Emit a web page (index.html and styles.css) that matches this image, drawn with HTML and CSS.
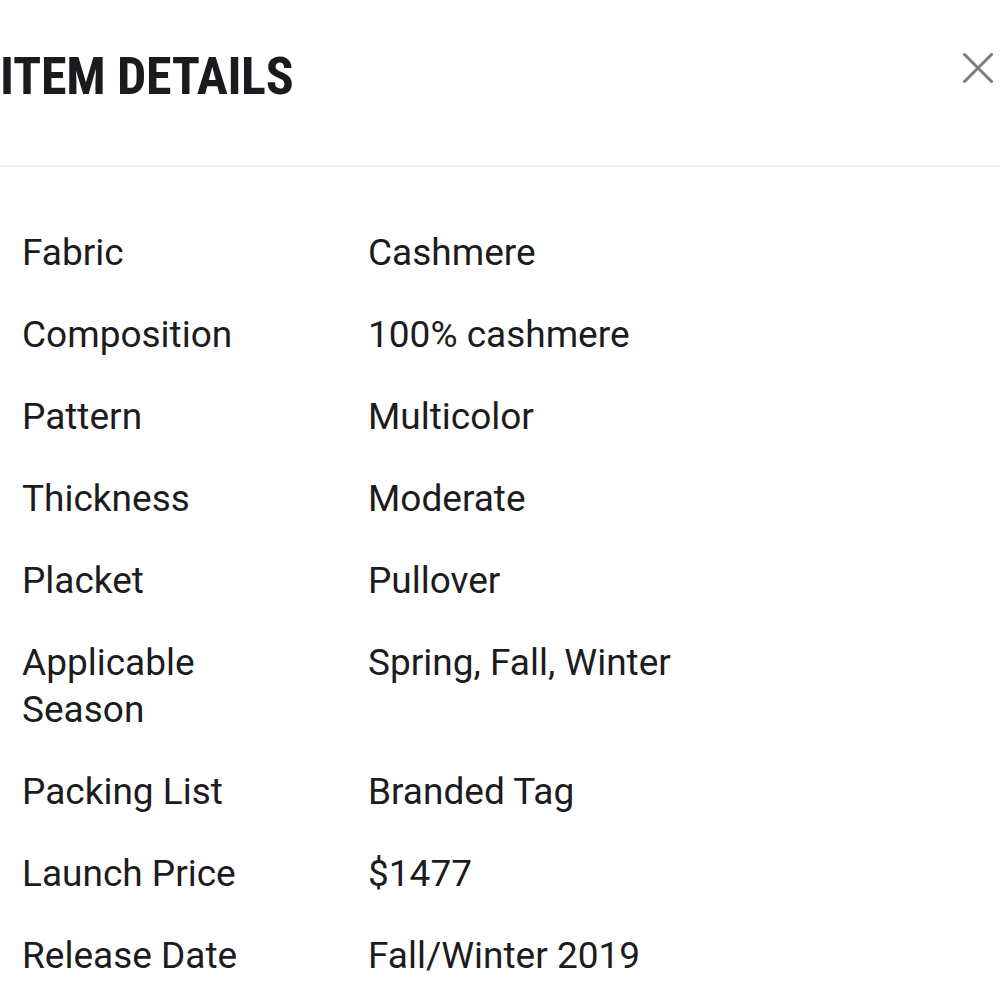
FILE: index.html
```html
<!DOCTYPE html>
<html lang="en">
<head>
<meta charset="utf-8">
<title>Item Details</title>
<link rel="stylesheet" href="styles.css">
</head>
<body>
<div class="sheet">
  <header class="sheet-header">
    <h1 class="sheet-title">ITEM DETAILS</h1>
    <button class="close-btn" aria-label="Close">
      <svg viewBox="0 0 30 30" width="30" height="30"><path d="M1.5 1.5 L28.5 28.5 M28.5 1.5 L1.5 28.5" stroke="#7a7a80" stroke-width="3" fill="none" stroke-linecap="round"/></svg>
    </button>
  </header>
  <dl class="details">
    <div class="row"><dt>Fabric</dt><dd>Cashmere</dd></div>
    <div class="row"><dt>Composition</dt><dd>100% cashmere</dd></div>
    <div class="row"><dt>Pattern</dt><dd>Multicolor</dd></div>
    <div class="row"><dt>Thickness</dt><dd>Moderate</dd></div>
    <div class="row"><dt>Placket</dt><dd>Pullover</dd></div>
    <div class="row"><dt>Applicable Season</dt><dd>Spring, Fall, Winter</dd></div>
    <div class="row"><dt>Packing List</dt><dd>Branded Tag</dd></div>
    <div class="row"><dt>Launch Price</dt><dd>$1477</dd></div>
    <div class="row"><dt>Release Date</dt><dd>Fall/Winter 2019</dd></div>
  </dl>
</div>
</body>
</html>
```
FILE: styles.css
```css
* { box-sizing: border-box; }
html, body { margin: 0; padding: 0; background: #fff; }
body { font-family: Roboto, "Noto Sans", "Liberation Sans", sans-serif; color: #1c1c1e; }
.sheet { width: 1000px; }
.sheet-header {
  position: relative;
  padding: 51px 0 62px 0;
  border-bottom: 2px solid #f1f1f1;
}
.sheet-title {
  margin: 0;
  font-family: "Roboto Condensed", Roboto, sans-serif;
  font-weight: 700;
  font-size: 52px;
  line-height: 52px;
  letter-spacing: -0.3px;
  color: #1b1b1f;
}
.close-btn {
  position: absolute;
  top: 53px;
  right: 7px;
  width: 30px;
  height: 30px;
  padding: 0;
  border: 0;
  background: none;
}
.close-btn svg { display: block; }
.details {
  margin: 0;
  padding: 44px 0 0 22px;
}
.row {
  display: grid;
  grid-template-columns: 346px 1fr;
  padding: 17.5px 0;
  font-size: 37px;
  line-height: 47px;
}
.row dt { padding-right: 120px; }
.row dd { margin: 0; }
```
